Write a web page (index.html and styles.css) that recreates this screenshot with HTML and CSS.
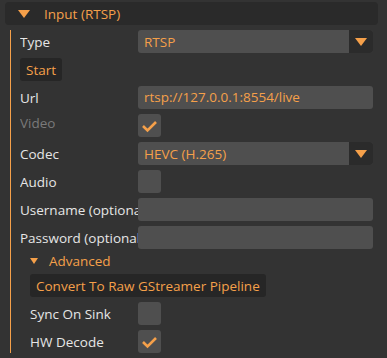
FILE: index.html
```html
<!DOCTYPE html>
<html>
<head>
    <title>Input (RTSP)</title>
    <link rel="stylesheet" href="styles.css">
</head>
<body>
    <div class="header">
        <span class="arrow"></span>
        <span class="header-text">Input (RTSP)</span>
    </div>

    <div class="section">
        <div class="row">
            <div class="label">Type</div>
            <div class="field combo">
                <span class="combo-text">RTSP</span>
                <span class="combo-btn"><span class="arrow"></span></span>
            </div>
        </div>
        <div class="row">
            <button class="button">Start</button>
        </div>
        <div class="row">
            <div class="label">Url</div>
            <div class="field input">rtsp://127.0.0.1:8554/live</div>
        </div>
        <div class="row">
            <div class="label disabled">Video</div>
            <div class="checkbox checked">
                <svg width="23" height="23" viewBox="0 0 23 23"><path d="M5 12 L9.5 16.5 L18 8" fill="none" stroke="#f5a04a" stroke-width="2.6"/></svg>
            </div>
        </div>
        <div class="row">
            <div class="label">Codec</div>
            <div class="field combo">
                <span class="combo-text">HEVC (H.265)</span>
                <span class="combo-btn"><span class="arrow"></span></span>
            </div>
        </div>
        <div class="row">
            <div class="label">Audio</div>
            <div class="checkbox"></div>
        </div>
        <div class="row">
            <div class="label">Username (optional)</div>
            <div class="field input"></div>
        </div>
        <div class="row">
            <div class="label">Password (optional)</div>
            <div class="field input"></div>
        </div>

        <div class="subsection">
            <div class="tree-node">
                <span class="arrow small"></span>
                <span class="header-text">Advanced</span>
            </div>
            <div class="row">
                <button class="button">Convert To Raw GStreamer Pipeline</button>
            </div>
            <div class="row">
                <div class="label">Sync On Sink</div>
                <div class="checkbox"></div>
            </div>
            <div class="row">
                <div class="label">HW Decode</div>
                <div class="checkbox checked">
                    <svg width="23" height="23" viewBox="0 0 23 23"><path d="M5 12 L9.5 16.5 L18 8" fill="none" stroke="#f5a04a" stroke-width="2.6"/></svg>
                </div>
            </div>
        </div>
    </div>
</body>
</html>
```

FILE: styles.css
```css
body {
    margin: 0;
    background: #333333;
    color: #e6e6e6;
    font-family: "Open Sans", "Noto Sans", sans-serif;
    font-size: 13.5px;
}

.header {
    display: flex;
    align-items: center;
    height: 23px;
    margin: 2px 9px 0 5px;
    background: #2a2a2a;
    border-radius: 4px;
}

.header .arrow {
    margin: 0 14px 0 13px;
}

.header-text {
    color: #f5a04a;
}

.arrow {
    display: inline-block;
    width: 0;
    height: 0;
    border-left: 6px solid transparent;
    border-right: 6px solid transparent;
    border-top: 8px solid #f5a04a;
}

    .arrow.small {
        border-left-width: 4px;
        border-right-width: 4px;
        border-top-width: 6px;
    }

.section {
    margin: 5px 0 0 10px;
    padding: 0 14px 0 9px;
    border-left: 1px solid #f5a04a;
}

.row {
    display: flex;
    align-items: center;
    height: 23px;
    margin-bottom: 5px;
}

.label {
    width: 118px;
    flex: none;
    overflow: hidden;
    white-space: nowrap;
}

    /* disabled text isn't frame-aligned, sits a bit higher */
    .label.disabled {
        align-self: flex-start;
        color: #7a7a7a;
    }

.field {
    flex: 1;
    height: 23px;
    background: #4f4f4f;
    border-radius: 3px;
    box-sizing: border-box;
}

.input {
    padding-left: 6px;
    line-height: 23px;
    color: #f5a04a;
}

.combo {
    display: flex;
    align-items: center;
    overflow: hidden;
}

.combo-text {
    flex: 1;
    padding-left: 6px;
    color: #f5a04a;
}

.combo-btn {
    display: flex;
    align-items: center;
    justify-content: center;
    width: 24px;
    height: 23px;
    background: #2b2b2b;
}

.checkbox {
    width: 23px;
    height: 23px;
    background: #4f4f4f;
    border-radius: 3px;
}

    .checkbox svg {
        display: block;
    }

.button {
    height: 23px;
    padding: 0 6px;
    border: none;
    border-radius: 3px;
    background: #262626;
    color: #f5a04a;
    font-family: inherit;
    font-size: 13.5px;
}

.subsection {
    padding-left: 10px;
}

    .subsection .label {
        width: 108px;
    }

.tree-node {
    display: flex;
    align-items: center;
    height: 15px;
    margin: -1px 0 6px;
}

    .tree-node .arrow {
        margin: 0 11px 0 0;
    }
```
